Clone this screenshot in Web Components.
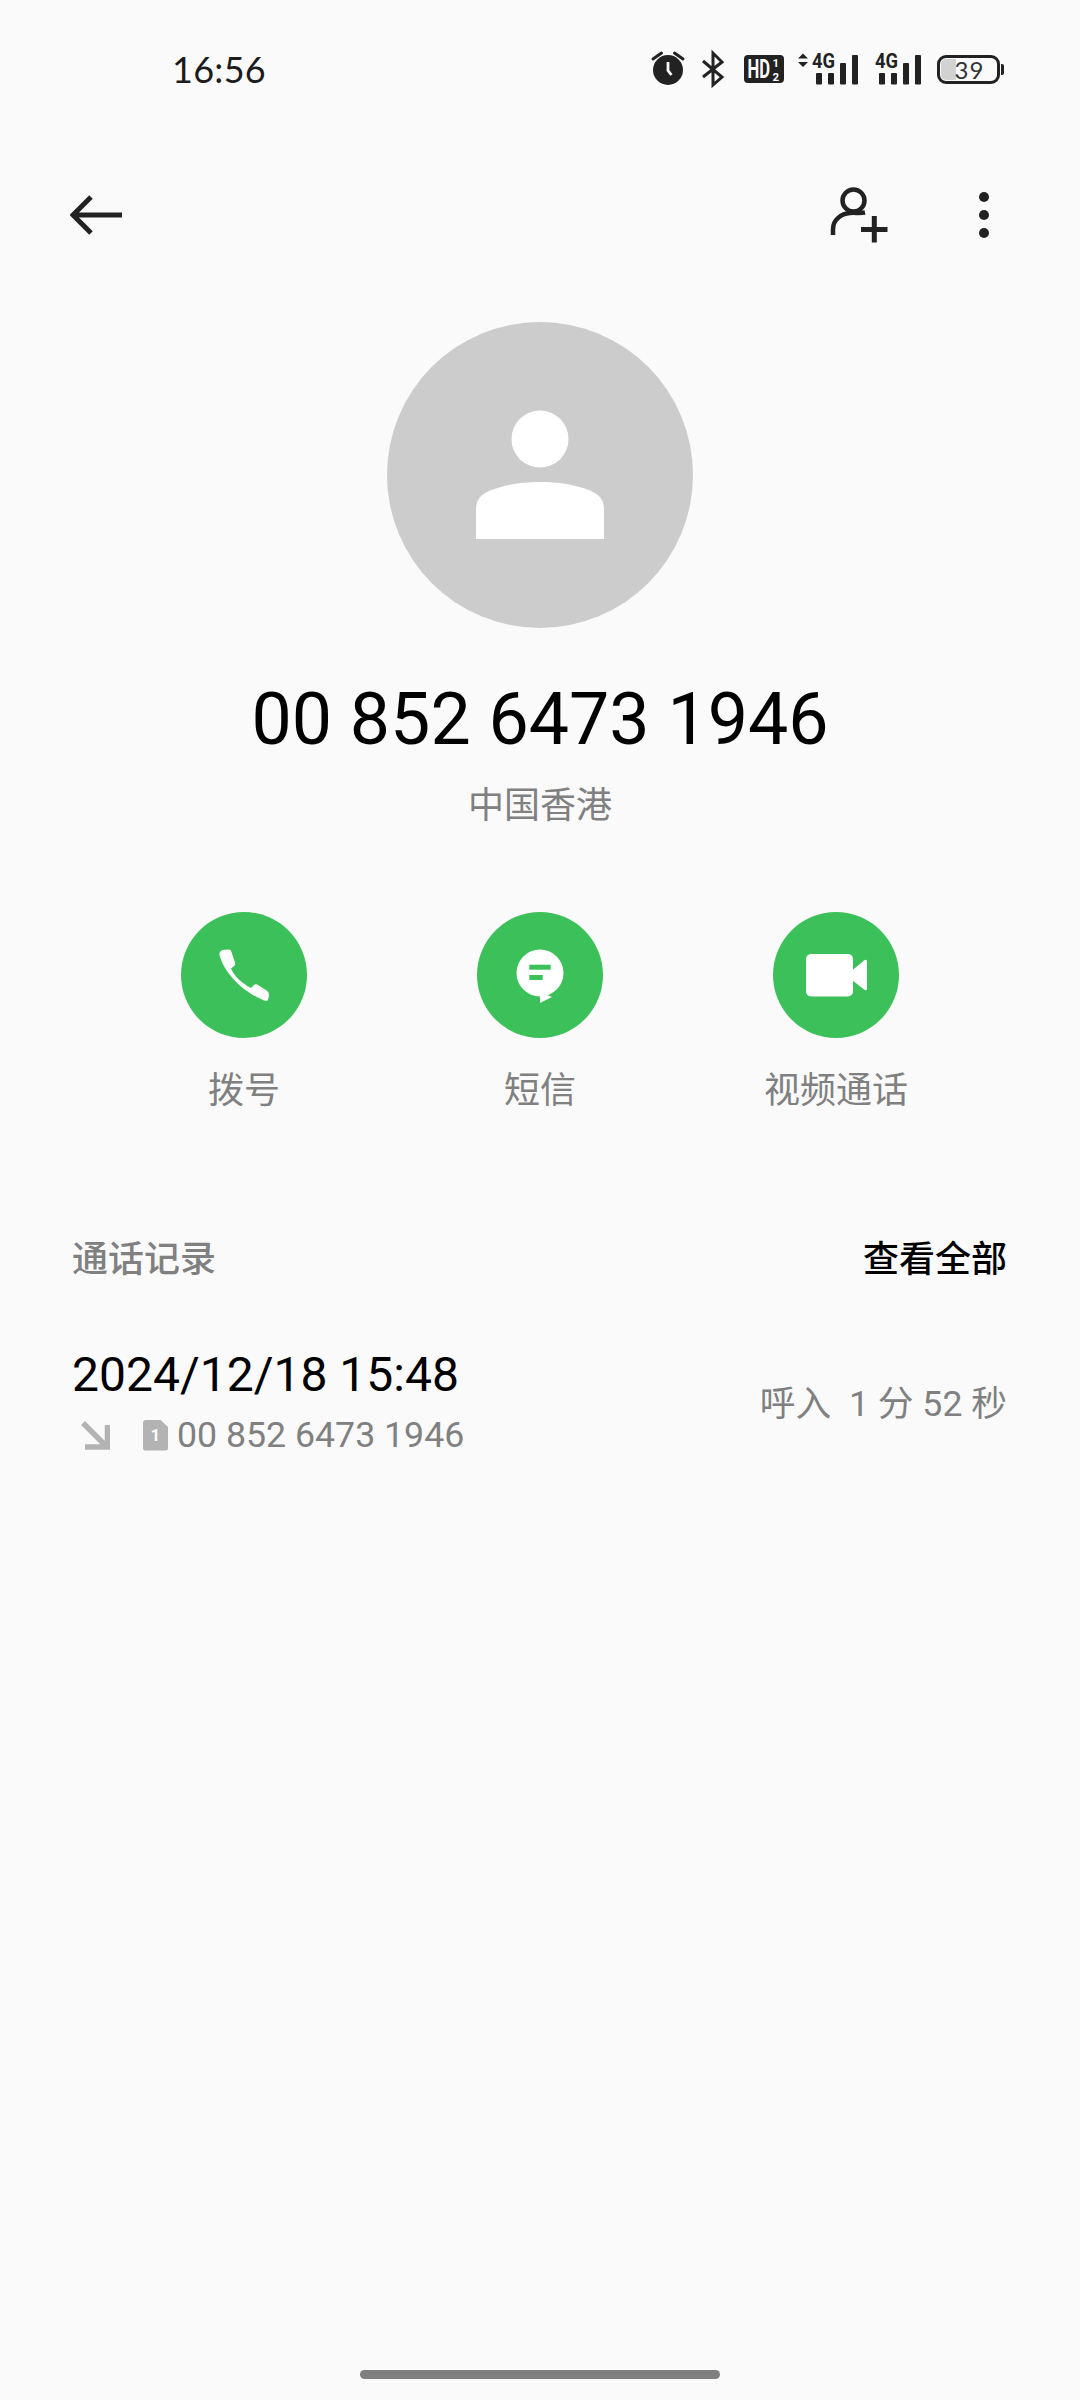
<!DOCTYPE html>
<html lang="zh-CN">
<head>
<meta charset="utf-8">
<title>00 852 6473 1946</title>
<style>
    html, body { margin: 0; padding: 0; background: #fafafa; }
    body { font-family: Roboto, "Noto Sans CJK SC", sans-serif; }
</style>
</head>
<body>
<contact-page>
    <status-bar time="16:56"></status-bar>
    <app-header></app-header>
    <contact-card number="00 852 6473 1946" region="中国香港"></contact-card>
    <action-row>
        <action-button label="拨号" icon="phone"></action-button>
        <action-button label="短信" icon="message"></action-button>
        <action-button label="视频通话" icon="video"></action-button>
    </action-row>
    <log-header title="通话记录" link="查看全部"></log-header>
    <log-row date="2024/12/18 15:48" number="00 852 6473 1946" detail="呼入  1 分 52 秒"></log-row>
    <home-bar></home-bar>
</contact-page>

<script>
const INK = '#222222';

window.customElements.define('contact-page', class extends HTMLElement {
    constructor() {
        super();
        this.attachShadow({ mode: 'open' });
        this.shadowRoot.innerHTML = `
            <style>
                :host {
                    display: flex;
                    flex-direction: column;
                    width: 1080px;
                    height: 2400px;
                    overflow: hidden;
                    background: #fafafa;
                    font-family: Roboto, "Noto Sans CJK SC", sans-serif;
                }
            </style>
            <slot></slot>
        `;
    }
});

window.customElements.define('status-bar', class extends HTMLElement {
    connectedCallback() {
        this.attachShadow({ mode: 'open' });
        this.shadowRoot.innerHTML = `
            <style>
                :host {
                    display: flex;
                    align-items: center;
                    justify-content: space-between;
                    height: 138px;
                    padding: 0 76px 0 172px;
                    box-sizing: border-box;
                }
                .time {
                    font: 400 36px Lato, sans-serif;
                    color: #1c1c1c;
                    letter-spacing: 0.3px;
                }
                .icons { display: flex; align-items: center; }
                svg { display: block; flex: none; overflow: visible; }
                text { font-family: Roboto, sans-serif; font-weight: 700; }
                .battery {
                    display: flex;
                    align-items: center;
                    margin-left: 16px;
                }
                .shell {
                    position: relative;
                    width: 63px;
                    height: 29px;
                    box-sizing: border-box;
                    border: 3px solid ${INK};
                    border-radius: 9px;
                    display: flex;
                    align-items: center;
                    justify-content: center;
                    font: 400 24px Lato, sans-serif;
                    color: #333;
                    padding-left: 2px;
                }
                .level {
                    position: absolute;
                    left: 1px;
                    top: 1px;
                    bottom: 1px;
                    width: 15px;
                    background: #d2d2d2;
                    border-radius: 5px 0 0 5px;
                }
                .label { position: relative; letter-spacing: 1px; line-height: 23px; }
                .nub {
                    width: 3px;
                    height: 11px;
                    margin-left: 1px;
                    background: ${INK};
                    border-radius: 0 2px 2px 0;
                }
            </style>
            <span class="time">${this.getAttribute('time')}</span>
            <div class="icons">
                <svg width="34" height="38" viewBox="0 0 34 38" style="margin-right:15px">
                    <circle cx="17" cy="20" r="15" fill="${INK}"/>
                    <path d="M2 9L10.5 3M32 9L23.500 3" stroke="${INK}" stroke-width="3" stroke-linecap="round"/>
                    <path d="M17 12V20.500L20.500 25" stroke="#fafafa" stroke-width="2.800" fill="none"/>
                </svg>
                <svg width="26" height="38" viewBox="0 0 26 38" style="margin-right:18px">
                    <path d="M3 11L22 27L13 35V3L22 12L3 27" stroke="${INK}" stroke-width="3" fill="none"/>
                </svg>
                <svg width="40" height="28" viewBox="0 0 40 28" style="margin-right:14px">
                    <rect width="40" height="28" rx="4" fill="${INK}"/>
                    <text transform="translate(3.500 23) scale(0.64 1)" font-size="26" fill="#fafafa">HD</text>
                    <text x="28.500" y="11.500" font-size="11.500" fill="#fafafa">1</text>
                    <text x="28.500" y="25.500" font-size="11.500" fill="#fafafa">2</text>
                </svg>
                <svg width="60" height="32" viewBox="0 0 60 32" style="margin-right:17px">
                    <path d="M0 5.500L5 0.500L10 5.500ZM0 9H10L5 14Z" fill="${INK}"/>
                    <text x="14" y="15.300" font-size="20" fill="${INK}" textLength="23" lengthAdjust="spacingAndGlyphs">4G</text>
                    <rect x="18" y="20" width="6" height="11.500" rx="1" fill="${INK}"/>
                    <rect x="30" y="20" width="6" height="11.500" rx="1" fill="${INK}"/>
                    <rect x="42" y="10" width="6" height="21.500" rx="1" fill="${INK}"/>
                    <rect x="54" y="2" width="6" height="29.500" rx="1" fill="${INK}"/>
                </svg>
                <svg width="46" height="32" viewBox="0 0 46 32">
                    <text x="0" y="15.300" font-size="20" fill="${INK}" textLength="23" lengthAdjust="spacingAndGlyphs">4G</text>
                    <rect x="4" y="20" width="6" height="11.500" rx="1" fill="${INK}"/>
                    <rect x="16" y="20" width="6" height="11.500" rx="1" fill="${INK}"/>
                    <rect x="28" y="10" width="6" height="21.500" rx="1" fill="${INK}"/>
                    <rect x="40" y="2" width="6" height="29.500" rx="1" fill="${INK}"/>
                </svg>
                <div class="battery">
                    <div class="shell"><div class="level"></div><span class="label">39</span></div>
                    <div class="nub"></div>
                </div>
            </div>
        `;
    }
});

window.customElements.define('app-header', class extends HTMLElement {
    constructor() {
        super();
        this.attachShadow({ mode: 'open' });
        this.shadowRoot.innerHTML = `
            <style>
                :host {
                    display: flex;
                    align-items: center;
                    justify-content: space-between;
                    height: 90px;
                    margin-top: 32px;
                    padding: 0 91px 0 70px;
                }
                .actions { display: flex; align-items: center; gap: 89px; }
                svg { display: block; }
            </style>
            <svg width="54" height="44" viewBox="0 0 54 44">
                <path d="M52 22H5M21 4L3 22L21 40" stroke="${INK}" stroke-width="5" fill="none"/>
            </svg>
            <div class="actions">
                <svg width="60" height="60" viewBox="0 0 60 60">
                    <circle cx="23.500" cy="15.500" r="11" stroke="${INK}" stroke-width="4.500" fill="none"/>
                    <path d="M3 50V44C3 35 11 28.500 20 28C25 27.500 30 28.500 35 27.500" stroke="${INK}" stroke-width="4.500" fill="none"/>
                    <path d="M31 44.500H57.500M44.300 31V57.500" stroke="${INK}" stroke-width="5" fill="none"/>
                </svg>
                <svg width="10" height="46" viewBox="0 0 10 46">
                    <circle cx="5" cy="5" r="5" fill="${INK}"/>
                    <circle cx="5" cy="23" r="5" fill="${INK}"/>
                    <circle cx="5" cy="41" r="5" fill="${INK}"/>
                </svg>
            </div>
        `;
    }
});

window.customElements.define('contact-card', class extends HTMLElement {
    connectedCallback() {
        this.attachShadow({ mode: 'open' });
        this.shadowRoot.innerHTML = `
            <style>
                :host {
                    display: flex;
                    flex-direction: column;
                    align-items: center;
                    margin-top: 62px;
                }
                .avatar {
                    width: 306px;
                    height: 306px;
                    border-radius: 50%;
                    background: #cccccc;
                    display: flex;
                    align-items: center;
                    justify-content: center;
                }
                svg { display: block; }
                .number {
                    margin-top: 50px;
                    font-size: 71.7px;
                    line-height: 84px;
                    color: #000;
                }
                .region {
                    margin-top: 19px;
                    font-size: 36px;
                    line-height: 50px;
                    color: #808080;
                }
            </style>
            <div class="avatar">
                <svg width="306" height="306" viewBox="0 0 306 306">
                    <circle cx="153" cy="117" r="28.500" fill="#fff"/>
                    <path d="M89 217V187C89 177 95 172 103 168.500C120 162 135 160 153 160C171 160 186 162 203 168.500C211 172 217 177 217 187V217Z" fill="#fff"/>
                </svg>
            </div>
            <div class="number">${this.getAttribute('number')}</div>
            <div class="region">${this.getAttribute('region')}</div>
        `;
    }
});

window.customElements.define('action-row', class extends HTMLElement {
    constructor() {
        super();
        this.attachShadow({ mode: 'open' });
        this.shadowRoot.innerHTML = `
            <style>
                :host {
                    display: grid;
                    grid-template-columns: repeat(3, 296px);
                    justify-content: center;
                    margin-top: 81px;
                }
            </style>
            <slot></slot>
        `;
    }
});

window.customElements.define('action-button', class extends HTMLElement {
    connectedCallback() {
        const icons = {
            phone: `<path d="M38.500 43C38 40.500 39.500 38.500 42 38L47 37.500C49 37.300 50 38 50.500 40L54 50.500C54.500 52.500 54 53.500 52.500 54.500L50 56.500C53 64 61 71.500 70 76L72.500 73.500C74 72.200 75.500 72 77 73L85.500 78.500C87.500 79.800 88 81.500 88 83.500L87 88C86.500 89 85 89 83 88.500C60 79 43 60 38.500 43Z" fill="#fff"/>`,
            message: `<circle cx="63" cy="61" r="23.500" fill="#fff"/>
                <path d="M63 80V91L75 85Z" fill="#fff"/>
                <rect x="52.300" y="52.700" width="21.400" height="5" fill="#3cc059"/>
                <rect x="52.300" y="63" width="13.400" height="5" fill="#3cc059"/>`,
            video: `<rect x="33" y="42" width="47" height="42.500" rx="5" fill="#fff"/>
                <path d="M79 58.500L91 48.500Q94 46.500 94 50V76Q94 79.500 91 77.500L79 68Z" fill="#fff"/>`,
        };
        this.attachShadow({ mode: 'open' });
        this.shadowRoot.innerHTML = `
            <style>
                :host {
                    display: flex;
                    flex-direction: column;
                    align-items: center;
                }
                .disc {
                    width: 126px;
                    height: 126px;
                    border-radius: 50%;
                    background: #3cc059;
                }
                svg { display: block; }
                .label {
                    margin-top: 28px;
                    font-size: 36px;
                    line-height: 50px;
                    color: #808080;
                }
            </style>
            <div class="disc">
                <svg width="126" height="126" viewBox="0 0 126 126">${icons[this.getAttribute('icon')]}</svg>
            </div>
            <div class="label">${this.getAttribute('label')}</div>
        `;
    }
});

window.customElements.define('log-header', class extends HTMLElement {
    connectedCallback() {
        this.attachShadow({ mode: 'open' });
        this.shadowRoot.innerHTML = `
            <style>
                :host {
                    display: flex;
                    justify-content: space-between;
                    margin-top: 119px;
                    padding: 0 73px 0 72px;
                    font-size: 36px;
                    line-height: 50px;
                    font-weight: 500;
                }
                .title { color: #808080; }
                .link { color: #000; }
            </style>
            <span class="title">${this.getAttribute('title')}</span>
            <span class="link">${this.getAttribute('link')}</span>
        `;
    }
});

window.customElements.define('log-row', class extends HTMLElement {
    connectedCallback() {
        this.attachShadow({ mode: 'open' });
        this.shadowRoot.innerHTML = `
            <style>
                :host {
                    display: flex;
                    align-items: center;
                    justify-content: space-between;
                    margin-top: 62px;
                    padding: 0 73px 0 72px;
                }
                .date {
                    font-size: 48px;
                    line-height: 56px;
                    color: #000;
                }
                .sub {
                    display: flex;
                    align-items: center;
                    margin-top: 11px;
                    font-size: 35.7px;
                    line-height: 42px;
                    color: #808080;
                }
                .arrow { display: block; margin: 0 33px 0 9px; }
                .sim {
                    flex: none;
                    width: 25px;
                    height: 31px;
                    margin-right: 9px;
                    background: #b3b3b3;
                    clip-path: polygon(0 0, 68% 0, 100% 24%, 100% 100%, 0 100%);
                    border-radius: 3px;
                    display: flex;
                    align-items: center;
                    justify-content: center;
                    font-size: 17px;
                    line-height: 31px;
                    font-weight: 700;
                    color: #fafafa;
                }
                .detail {
                    font-size: 35.7px;
                    white-space: pre;
                    color: #808080;
                    margin-bottom: 3px;
                }
            </style>
            <div>
                <div class="date">${this.getAttribute('date')}</div>
                <div class="sub">
                    <svg class="arrow" width="29" height="29" viewBox="0 0 29 29">
                        <path d="M2 2L26 26M4 26H26.500V4" stroke="#b3b3b3" stroke-width="5.500" fill="none"/>
                    </svg>
                    <span class="sim">1</span>
                    <span>${this.getAttribute('number')}</span>
                </div>
            </div>
            <span class="detail">${this.getAttribute('detail')}</span>
        `;
    }
});

window.customElements.define('home-bar', class extends HTMLElement {
    constructor() {
        super();
        this.attachShadow({ mode: 'open' });
        this.shadowRoot.innerHTML = `
            <style>
                :host {
                    display: flex;
                    justify-content: center;
                    margin-top: auto;
                    padding-bottom: 21px;
                }
                .bar {
                    width: 360px;
                    height: 9px;
                    border-radius: 5px;
                    background: #7f7f7f;
                }
            </style>
            <div class="bar"></div>
        `;
    }
});
</script>
</body>
</html>
